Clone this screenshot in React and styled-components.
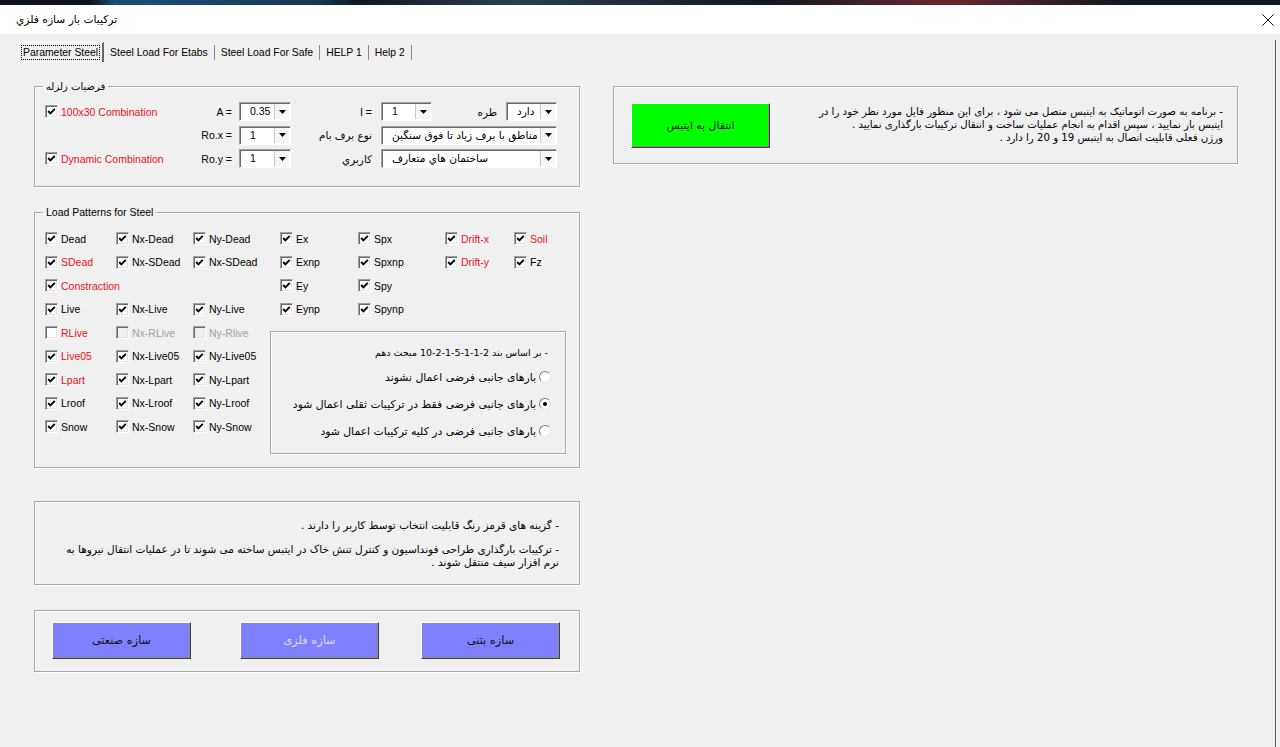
import React from "react";
import styled, { createGlobalStyle } from "styled-components";

const Global = createGlobalStyle`
  html, body { margin: 0; padding: 0; background: #f0f0f0; }
  body { font-family: "Liberation Sans", "DejaVu Sans", sans-serif; font-size: 10.5px; color: #000; }
  #root { width: 1280px; height: 747px; overflow: hidden; }
`;

const AR = `"DejaVu Sans", sans-serif`;

const Window = styled.div`
  width: 1280px;
  height: 747px;
  display: flex;
  flex-direction: column;
  background: #f0f0f0;
  overflow: hidden;
`;
const TopStrip = styled.div`
  height: 5px;
  flex: none;
  background: linear-gradient(90deg, #0c121a 0%, #0c121a 7%, #1d4f7a 9%, #16354f 25%, #101820 28%, #2a3e55 40%, #101820 60%, #6a2630 74%, #101820 88%);
`;
const TitleBar = styled.div`
  height: 29px;
  flex: none;
  background: #fff;
  display: flex;
  align-items: center;
  justify-content: space-between;
  padding: 0 6px 0 16px;
`;
const Title = styled.span`
  font-family: ${AR};
  font-size: 10.7px;
  direction: rtl;
`;
const CloseBtn = styled.span`
  width: 12px;
  height: 12px;
  display: flex;
`;
const Body = styled.div`
  flex: 1;
  display: flex;
  flex-direction: column;
  padding-top: 6px;
`;
const Page = styled.div`
  flex: 1;
  display: flex;
  flex-direction: column;
  margin-right: 4px;
  border-right: 1px solid #5e5e5e;
`;
const TabBar = styled.div`
  display: flex;
  align-items: center;
  height: 20px;
  margin-top: 2px;
  padding-left: 18px;
  font-size: 10.4px;
`;
const Tab = styled.div`
  display: flex;
  align-items: center;
  box-sizing: border-box;
  white-space: nowrap;
  ${(p) =>
    p.$active
      ? `height: 20px; padding: 0 3px; border-top: 1px solid #fff; border-left: 1px solid #fff; border-right: 2px solid #696969;`
      : `height: 15px; padding: 0 5px 0 5px; border-right: 1px solid #8a8a8a;`}
`;
const TabText = styled.span`
  line-height: 13px;
  padding: 0 1px;
  outline: ${(p) => (p.$focus ? "1px dotted #000" : "none")};
`;
const Content = styled.div`
  display: flex;
  align-items: flex-start;
  padding: 24px 0 0 34px;
`;
const LeftCol = styled.div`
  width: 546px;
  display: flex;
  flex-direction: column;
`;
const Frame = styled.div`
  box-sizing: border-box;
  height: ${(p) => p.$h}px;
  margin-top: ${(p) => p.$mt || 0}px;
  border: 1px solid #a9a9a9;
  box-shadow: 1px 1px 0 #fff, inset 1px 1px 0 #fff;
  padding: ${(p) => p.$pad || "0"};
  display: flex;
  flex-direction: column;
`;
const Legend = styled.span`
  align-self: flex-start;
  margin: -7px 0 0 8px;
  padding: 0 3px;
  line-height: 13px;
  background: #f0f0f0;
  font-family: ${(p) => (p.$ar ? AR : `"Liberation Sans", sans-serif`)};
  font-size: ${(p) => (p.$ar ? "10px" : "10.5px")};
`;

/* ---- checkbox ---- */
const CheckItem = styled.label`
  display: flex;
  align-items: center;
  gap: 3px;
  white-space: nowrap;
  color: ${(p) => (p.$disabled ? "#a3a3a3" : p.$red ? "#f01020" : "#000")};
`;
const CheckBox = styled.span`
  width: 13px;
  height: 13px;
  box-sizing: border-box;
  flex: none;
  background: ${(p) => (p.$disabled ? "#f0f0f0" : "#fff")};
  border: 1px solid;
  border-color: #a0a0a0 #fff #fff #a0a0a0;
  box-shadow: inset 1px 1px 0 #6a6a6a, inset -1px -1px 0 #e3e3e3;
  display: flex;
  align-items: center;
  justify-content: center;
`;
function Check({ label, red, checked = true, disabled }) {
  return (
    <CheckItem $red={red} $disabled={disabled}>
      <CheckBox $disabled={disabled}>
        {checked && (
          <svg width="9" height="9" viewBox="0 0 9 9">
            <polyline points="1.2,4 3.4,6.4 7.8,1.8" fill="none" stroke="#000" strokeWidth="1.9" />
          </svg>
        )}
      </CheckBox>
      {label}
    </CheckItem>
  );
}

/* ---- combo ---- */
const ComboBox = styled.div`
  display: flex;
  height: 19px;
  box-sizing: border-box;
  background: #fff;
  border: 1px solid;
  border-color: #a0a0a0 #fff #fff #a0a0a0;
  box-shadow: inset 1px 1px 0 #6a6a6a;
  grid-column: ${(p) => p.$span || "auto"};
`;
const ComboText = styled.span`
  flex: 1;
  padding-left: 10px;
  line-height: 17px;
  white-space: nowrap;
  overflow: hidden;
  font-family: ${(p) => (p.$ar ? AR : `"Liberation Sans", sans-serif`)};
  font-size: ${(p) => (p.$ar ? "10.6px" : "10.5px")};
`;
const ComboBtn = styled.span`
  width: 15px;
  margin: 1px 1px 1px 0;
  box-sizing: border-box;
  background: #f6f6f6;
  border-left: 1px solid #c8c8c8;
  display: flex;
  align-items: center;
  justify-content: center;
`;
function Combo({ value, ar, span }) {
  return (
    <ComboBox $span={span}>
      <ComboText $ar={ar}>{value}</ComboText>
      <ComboBtn>
        <svg width="7" height="4" viewBox="0 0 7 4">
          <polygon points="0,0 7,0 3.5,4" fill="#000" />
        </svg>
      </ComboBtn>
    </ComboBox>
  );
}

const SeismicGrid = styled.div`
  display: grid;
  grid-template-columns: 150px 44px 52px 90px 51px 74px 51px;
  grid-auto-rows: 19px;
  row-gap: 4.5px;
  margin: 9px 0 0 10px;
  align-items: center;
`;
const FieldLabel = styled.span`
  text-align: right;
  padding-right: ${(p) => p.$pr}px;
  white-space: nowrap;
  font-family: ${(p) => (p.$ar ? AR : `"Liberation Sans", sans-serif`)};
  font-size: ${(p) => (p.$ar ? "10.4px" : "10.5px")};
`;
const Empty = styled.span``;

const LoadGrid = styled.div`
  display: grid;
  grid-template-columns: 71px 77px 87px 78px 87px 69px 52px;
  grid-template-rows: repeat(9, 23.5px);
  margin: 8px 0 0 10px;
  align-items: center;
`;
const Cell = styled.div`
  grid-row: ${(p) => p.$r};
  grid-column: ${(p) => p.$c};
`;
const RadioFrame = styled.div`
  grid-column: 4 / -1;
  grid-row: 5 / span 5;
  align-self: start;
  height: 123px;
  margin: 10px 0 0 -10px;
  box-sizing: border-box;
  border: 1px solid #a9a9a9;
  box-shadow: 1px 1px 0 #fff, inset 1px 1px 0 #fff;
  direction: rtl;
  padding: 14px 14px 0 0;
  display: flex;
  flex-direction: column;
  font-family: ${AR};
  font-size: 10.8px;
`;
const RadioHeader = styled.div`
  line-height: 13px;
  margin: 0 3px 8px 0;
  white-space: nowrap;
  font-size: 9.5px;
`;
const RadioItem = styled.div`
  display: flex;
  align-items: center;
  gap: 3px;
  height: 20px;
  margin-bottom: 7px;
  white-space: nowrap;
`;
const RadioCircle = styled.span`
  width: 12px;
  height: 12px;
  box-sizing: border-box;
  flex: none;
  border-radius: 50%;
  background: #fff;
  border: 1px solid;
  border-color: #7a7a7a #e4e4e4 #e4e4e4 #7a7a7a;
  display: flex;
  align-items: center;
  justify-content: center;
  &::after {
    content: "";
    width: 4px;
    height: 4px;
    border-radius: 50%;
    background: #000;
    display: ${(p) => (p.$on ? "block" : "none")};
  }
`;

const NoteText = styled.div`
  direction: rtl;
  font-family: ${AR};
  font-size: ${(p) => p.$fs || 10.5}px;
  line-height: 13px;
  margin-top: ${(p) => p.$mt || 0}px;
`;
const Line = styled.div`
  white-space: nowrap;
`;

const ButtonRow = styled.div`
  display: flex;
  padding: 11px 0 0 17px;
`;
const Btn = styled.div`
  width: 139px;
  height: ${(p) => p.$h || 37}px;
  margin-left: ${(p) => p.$ml || 0}px;
  box-sizing: border-box;
  background: ${(p) => p.$bg};
  border: 1px solid;
  border-color: #fff #404040 #404040 #fff;
  box-shadow: inset -1px -1px 0 #8a8a8a;
  display: flex;
  align-items: center;
  justify-content: center;
  font-family: ${AR};
  font-size: ${(p) => p.$fs || 11.3}px;
  direction: rtl;
  color: ${(p) => (p.$disabled ? "#dcdcf6" : "#111")};
  flex: none;
`;

const RightPanel = styled.div`
  box-sizing: border-box;
  width: 625px;
  height: 78px;
  margin-left: 33px;
  border: 1px solid #a9a9a9;
  box-shadow: 1px 1px 0 #fff, inset 1px 1px 0 #fff;
  display: flex;
  justify-content: space-between;
  align-items: flex-start;
  padding: 16px 14px 0 17px;
`;

const E = null;
const L = (label, opts = {}) => ({ label, ...opts });
const loadRows = [
  [L("Dead"), L("Nx-Dead"), L("Ny-Dead"), L("Ex"), L("Spx"), L("Drift-x", { red: true }), L("Soil", { red: true })],
  [L("SDead", { red: true }), L("Nx-SDead"), L("Nx-SDead"), L("Exnp"), L("Spxnp"), L("Drift-y", { red: true }), L("Fz")],
  [L("Constraction", { red: true }), E, E, L("Ey"), L("Spy"), E, E],
  [L("Live"), L("Nx-Live"), L("Ny-Live"), L("Eynp"), L("Spynp"), E, E],
  [L("RLive", { red: true, checked: false }), L("Nx-RLive", { disabled: true, checked: false }), L("Ny-Rlive", { disabled: true, checked: false })],
  [L("Live05", { red: true }), L("Nx-Live05"), L("Ny-Live05")],
  [L("Lpart", { red: true }), L("Nx-Lpart"), L("Ny-Lpart")],
  [L("Lroof"), L("Nx-Lroof"), L("Ny-Lroof")],
  [L("Snow"), L("Nx-Snow"), L("Ny-Snow")],
];

const radios = [
  { text: "بارهای جانبی فرضی اعمال نشوند", on: false },
  { text: "بارهای جانبی فرضی فقط در ترکیبات ثقلی اعمال شود", on: true },
  { text: "بارهای جانبی فرضی در کلیه ترکیبات اعمال شود", on: false },
];

export default function App() {
  return (
    <Window>
      <Global />
      <TopStrip />
      <TitleBar>
        <Title>تركيبات بار سازه فلزي</Title>
        <CloseBtn>
          <svg width="12" height="12" viewBox="0 0 12 12">
            <path d="M0.5 0.5 L11.5 11.5 M11.5 0.5 L0.5 11.5" stroke="#111" strokeWidth="1" />
          </svg>
        </CloseBtn>
      </TitleBar>
      <Body>
        <Page>
          <TabBar>
            <Tab $active>
              <TabText $focus>Parameter Steel</TabText>
            </Tab>
            <Tab><TabText>Steel Load For Etabs</TabText></Tab>
            <Tab><TabText>Steel Load For Safe</TabText></Tab>
            <Tab><TabText>HELP 1</TabText></Tab>
            <Tab><TabText>Help 2</TabText></Tab>
          </TabBar>
          <Content>
            <LeftCol>
              <Frame $h={101}>
                <Legend $ar>فرضيات زلزله</Legend>
                <SeismicGrid>
                  <Check label="100x30 Combination" red />
                  <FieldLabel $pr={7}>A =</FieldLabel>
                  <Combo value="0.35" />
                  <FieldLabel $pr={9}>I =</FieldLabel>
                  <Combo value="1" />
                  <FieldLabel $pr={9} $ar>طره</FieldLabel>
                  <Combo value="دارد" ar />

                  <Empty />
                  <FieldLabel $pr={7}>Ro.x =</FieldLabel>
                  <Combo value="1" />
                  <FieldLabel $pr={9} $ar>نوع برف بام</FieldLabel>
                  <Combo value="مناطق با برف زياد تا فوق سنگين" ar span="5 / span 3" />

                  <Check label="Dynamic Combination" red />
                  <FieldLabel $pr={7}>Ro.y =</FieldLabel>
                  <Combo value="1" />
                  <FieldLabel $pr={9} $ar>كاربري</FieldLabel>
                  <Combo value="ساختمان هاي متعارف" ar span="5 / span 3" />
                </SeismicGrid>
              </Frame>

              <Frame $h={256} $mt={25}>
                <Legend>Load Patterns for Steel</Legend>
                <LoadGrid>
                  {loadRows.flatMap((row, r) =>
                    row.map((c, i) =>
                      c ? (
                        <Cell key={`${r}-${i}`} $r={r + 1} $c={i + 1}>
                          <Check label={c.label} red={c.red} checked={c.checked !== false} disabled={c.disabled} />
                        </Cell>
                      ) : null
                    )
                  )}
                  <RadioFrame>
                    <RadioHeader>- بر اساس بند 2-1-1-5-1-2-10 مبحث دهم</RadioHeader>
                    {radios.map((r) => (
                      <RadioItem key={r.text}>
                        <RadioCircle $on={r.on} />
                        <span>{r.text}</span>
                      </RadioItem>
                    ))}
                  </RadioFrame>
                </LoadGrid>
              </Frame>

              <Frame $h={84} $mt={33} $pad="17px 20px 0 16px">
                <NoteText>
                  <Line>- گزینه های قرمز رنگ قابلیت انتخاب توسط کاربر را دارند .</Line>
                </NoteText>
                <NoteText $mt={11}>
                  <Line>- ترکیبات بارگذاری طراحی فونداسیون و کنترل تنش خاک در ایتبس ساخته می شوند تا در عملیات انتقال نیروها به</Line>
                  <Line>نرم افزار سیف منتقل شوند .</Line>
                </NoteText>
              </Frame>

              <Frame $h={62} $mt={25}>
                <ButtonRow>
                  <Btn $bg="#8080ff">سازه صنعتی</Btn>
                  <Btn $bg="#8080ff" $ml={49} $disabled>سازه فلزی</Btn>
                  <Btn $bg="#8080ff" $ml={42}>سازه بتنی</Btn>
                </ButtonRow>
              </Frame>
            </LeftCol>

            <RightPanel>
              <Btn $bg="#00ff00" $h={45} $fs={10.8}>انتقال به ایتبس</Btn>
              <NoteText $mt={2} $fs={10.2}>
                <Line>- برنامه به صورت اتوماتیک به ایتبس متصل می شود ، برای این منظور فایل مورد نظر خود را در</Line>
                <Line>ایتبس باز نمایید ، سپس اقدام به انجام عملیات ساخت و انتقال ترکیبات بارگذاری نمایید .</Line>
                <Line>ورژن فعلی قابلیت اتصال به ایتبس 19 و 20 را دارد .</Line>
              </NoteText>
            </RightPanel>
          </Content>
        </Page>
      </Body>
    </Window>
  );
}
